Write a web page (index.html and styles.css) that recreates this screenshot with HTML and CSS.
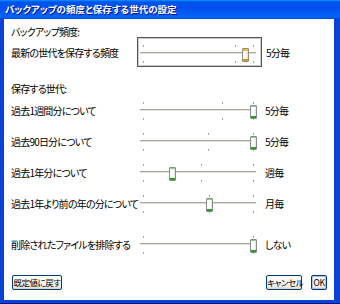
FILE: index.html
```html
<!DOCTYPE html>
<html lang="ja">
<head>
  <meta charset="UTF-8">
  <title>バックアップの頻度と保存する世代の設定</title>
  <link rel="stylesheet" href="styles.css">
</head>
<body>
  <div class="window">
    <div class="titlebar">
      <span class="title">バックアップの頻度と保存する世代の設定</span>
    </div>
    <div class="client">
      <div class="heading heading-first">バックアップ頻度:</div>

      <div class="row row-boxed">
        <div class="label">最新の世代を保存する頻度</div>
        <div class="slider-box">
          <div class="slider">
            <div class="track"></div>
            <span class="tick top" style="left:3px"></span>
            <span class="tick top" style="left:95px"></span>
            <span class="tick top" style="left:113px"></span>
            <span class="tick bottom" style="left:3px"></span>
            <span class="tick bottom" style="left:95px"></span>
            <span class="tick bottom" style="left:113px"></span>
            <span class="thumb focused" style="left:102px"></span>
          </div>
        </div>
        <div class="value">5分毎</div>
      </div>

      <div class="heading heading-second">保存する世代:</div>

      <div class="row row-first">
        <div class="label">過去1週間分について</div>
        <div class="slider">
          <div class="track"></div>
          <span class="tick top" style="left:3px"></span>
          <span class="tick top" style="left:82px"></span>
          <span class="tick top" style="left:113px"></span>
          <span class="tick bottom" style="left:3px"></span>
          <span class="tick bottom" style="left:82px"></span>
          <span class="tick bottom" style="left:113px"></span>
          <span class="thumb" style="left:110px"></span>
        </div>
        <div class="value">5分毎</div>
      </div>

      <div class="row">
        <div class="label">過去90日分について</div>
        <div class="slider">
          <div class="track"></div>
          <span class="tick top" style="left:3px"></span>
          <span class="tick top" style="left:68px"></span>
          <span class="tick top" style="left:113px"></span>
          <span class="tick bottom" style="left:3px"></span>
          <span class="tick bottom" style="left:68px"></span>
          <span class="tick bottom" style="left:113px"></span>
          <span class="thumb" style="left:110px"></span>
        </div>
        <div class="value">5分毎</div>
      </div>

      <div class="row">
        <div class="label">過去1年分について</div>
        <div class="slider">
          <div class="track"></div>
          <span class="tick top" style="left:3px"></span>
          <span class="tick top" style="left:61px"></span>
          <span class="tick top" style="left:113px"></span>
          <span class="tick bottom" style="left:3px"></span>
          <span class="tick bottom" style="left:61px"></span>
          <span class="tick bottom" style="left:113px"></span>
          <span class="thumb" style="left:29px"></span>
        </div>
        <div class="value">週毎</div>
      </div>

      <div class="row">
        <div class="label">過去1年より前の年の分について</div>
        <div class="slider">
          <div class="track"></div>
          <span class="tick top" style="left:3px"></span>
          <span class="tick top" style="left:69px"></span>
          <span class="tick top" style="left:113px"></span>
          <span class="tick bottom" style="left:3px"></span>
          <span class="tick bottom" style="left:69px"></span>
          <span class="tick bottom" style="left:113px"></span>
          <span class="thumb" style="left:66px"></span>
        </div>
        <div class="value">月毎</div>
      </div>

      <div class="row row-last">
        <div class="label">削除されたファイルを排除する</div>
        <div class="slider">
          <div class="track"></div>
          <span class="tick top" style="left:3px"></span>
          <span class="tick top" style="left:113px"></span>
          <span class="tick bottom" style="left:3px"></span>
          <span class="tick bottom" style="left:113px"></span>
          <span class="thumb" style="left:110px"></span>
        </div>
        <div class="value">しない</div>
      </div>

      <div class="buttons">
        <button class="btn btn-reset">既定値に戻す</button>
        <button class="btn btn-cancel">キャンセル</button>
        <button class="btn btn-ok">OK</button>
      </div>
    </div>
  </div>
</body>
</html>
```

FILE: styles.css
```css
body {
  margin: 0;
  padding: 0;
  background: #fff;
  font-family: "Noto Sans CJK JP", "Noto Sans", sans-serif;
  font-feature-settings: "palt";
  color: #000;
}
.window {
  width: 340px;
  height: 304px;
  display: flex;
  flex-direction: column;
  background: #0843d6;
  border-bottom: 1px solid #00138c;
  box-sizing: border-box;
}
.titlebar {
  height: 19px;
  flex: none;
  background: linear-gradient(180deg, #0997ff, #0053ee 10%, #0050ee 40%, #0463f8 88%, #005bff 94%, #003dd7);
}
.title {
  display: block;
  padding-left: 5px;
  line-height: 19px;
  font-size: 9.5px;
  font-weight: bold;
  color: #fff;
  text-shadow: 1px 1px #0f1089;
  white-space: nowrap;
}
.client {
  flex: 1;
  margin: 0 6px 3px 4px;
  padding: 8px 7px 0 7px;
  background: #fff;
  font-size: 10px;
  letter-spacing: -0.8px;
}
.heading {
  line-height: 10px;
  white-space: nowrap;
}
.heading-second {
  margin-top: 17px;
}
.row {
  display: flex;
  align-items: flex-start;
  margin-top: 12px;
}
.row-first {
  margin-top: 8px;
}
.row-last {
  margin-top: 22px;
}
.row-boxed {
  align-items: center;
  margin-top: 0;
}
.label, .value {
  flex: none;
  line-height: 17px;
  white-space: nowrap;
}
.label {
  width: 129px;
}
.row-boxed .label {
  width: 126px;
}
.slider-box {
  flex: none;
  width: 125px;
  height: 30px;
  padding: 7px 5px 0 2px;
  margin-right: 4px;
  box-sizing: border-box;
  border: 1px solid #555;
  box-shadow: inset 0 0 0 1px #c9c9c9;
}
.slider {
  flex: none;
  position: relative;
  width: 116px;
  height: 19px;
}
.row > .slider {
  margin-right: 9px;
}
.track {
  position: absolute;
  left: 0;
  right: 0;
  top: 7px;
  height: 1px;
  border-top: 1px solid #a9a69c;
  background: #e2dfd6;
}
.tick {
  position: absolute;
  width: 1px;
  height: 2px;
  background: #a3a3a3;
}
.tick.top {
  top: 0;
}
.tick.bottom {
  top: 16px;
}
.thumb {
  position: absolute;
  top: 3px;
  width: 5px;
  height: 12px;
  border: 1px solid #8b8b8b;
  border-radius: 1px;
  background: linear-gradient(90deg, #fff 60%, #e0e0da);
  box-shadow: inset 0 1px 0 #7fd97f, inset 0 -2px 0 #21a121;
}
.thumb.focused {
  background: linear-gradient(90deg, #fffbe9 50%, #f1dcb0);
  box-shadow: inset 0 2px 0 #f8b636, inset 0 -2px 0 #e2931e;
}
.buttons {
  display: flex;
  gap: 9px;
  margin-top: 20px;
}
.btn {
  height: 15px;
  padding: 0;
  font-family: inherit;
  font-feature-settings: "palt";
  font-size: 8.5px;
  letter-spacing: -0.5px;
  line-height: 13px;
  white-space: nowrap;
  color: #000;
  border: 1px solid #003c74;
  border-radius: 2px;
  background: linear-gradient(180deg, #fff, #f1efe8 80%, #d8d3c7);
  cursor: pointer;
}
.btn-reset {
  width: 50px;
  margin-left: 1px;
  margin-right: auto;
}
.btn-cancel {
  width: 36px;
}
.btn-ok {
  width: 16px;
  box-shadow: inset 0 0 0 1px #a8c4f0;
}
```
